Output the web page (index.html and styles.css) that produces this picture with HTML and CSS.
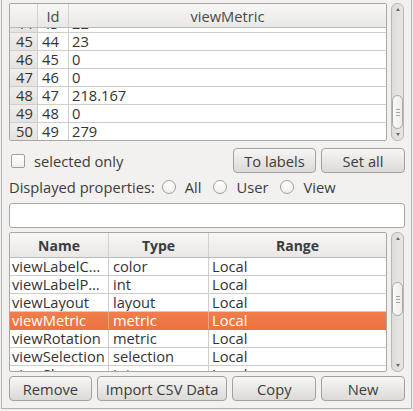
FILE: index.html
```html
<!DOCTYPE html>
<html>
<head>
<meta charset="utf-8">
<link rel="stylesheet" href="styles.css">
</head>
<body>
<div class="panel">
  <div class="tablebox top">
    <div class="table t1">
      <div class="hrow">
        <div class="hc num"></div>
        <div class="hc idc">Id</div>
        <div class="hc last">viewMetric</div>
      </div>
      <div class="tbody">
        <div class="row partial"><div class="c num">44</div><div class="c idc">43</div><div class="c last">22</div></div>
        <div class="row"><div class="c num">45</div><div class="c idc">44</div><div class="c last">23</div></div>
        <div class="row"><div class="c num">46</div><div class="c idc">45</div><div class="c last">0</div></div>
        <div class="row"><div class="c num">47</div><div class="c idc">46</div><div class="c last">0</div></div>
        <div class="row"><div class="c num">48</div><div class="c idc">47</div><div class="c last">218.167</div></div>
        <div class="row"><div class="c num">49</div><div class="c idc">48</div><div class="c last">0</div></div>
        <div class="row"><div class="c num">50</div><div class="c idc">49</div><div class="c last">279</div></div>
      </div>
    </div>
    <div class="sbar">
      <div class="arrow up"></div>
      <div class="trough"><div class="space s1a"></div><div class="thumb"><i></i><i></i><i></i></div><div class="space s1b"></div></div>
      <div class="arrow down"></div>
    </div>
  </div>

  <div class="opts">
    <label class="check"><span class="box"></span>selected only</label>
    <div class="btns">
      <button class="btn w82">To labels</button>
      <button class="btn w83">Set all</button>
    </div>
  </div>

  <div class="disp">
    <span class="lbl">Displayed properties:</span>
    <span class="radio r1"><span class="dot"></span>All</span>
    <span class="radio"><span class="dot"></span>User</span>
    <span class="radio"><span class="dot"></span>View</span>
  </div>

  <div class="input"></div>

  <div class="tablebox bottom">
    <div class="table t2">
      <div class="hrow">
        <div class="hc name">Name</div>
        <div class="hc type">Type</div>
        <div class="hc last">Range</div>
      </div>
      <div class="tbody">
        <div class="row"><div class="c name">viewLabelColor</div><div class="c type">color</div><div class="c last">Local</div></div>
        <div class="row"><div class="c name">viewLabelPosition</div><div class="c type">int</div><div class="c last">Local</div></div>
        <div class="row"><div class="c name">viewLayout</div><div class="c type">layout</div><div class="c last">Local</div></div>
        <div class="row sel"><div class="c name">viewMetric</div><div class="c type">metric</div><div class="c last">Local</div></div>
        <div class="row"><div class="c name">viewRotation</div><div class="c type">metric</div><div class="c last">Local</div></div>
        <div class="row"><div class="c name">viewSelection</div><div class="c type">selection</div><div class="c last">Local</div></div>
        <div class="row"><div class="c name">viewShape</div><div class="c type">int</div><div class="c last">Local</div></div>
      </div>
    </div>
    <div class="sbar">
      <div class="arrow up"></div>
      <div class="trough"><div class="space s2a"></div><div class="thumb"><i></i><i></i><i></i></div><div class="space s2b"></div></div>
      <div class="arrow down"></div>
    </div>
  </div>

  <div class="bbtns">
    <button class="btn w82">Remove</button>
    <button class="btn w130">Import CSV Data</button>
    <button class="btn w83">Copy</button>
    <button class="btn w83">New</button>
  </div>
</div>
</body>
</html>
```

FILE: styles.css
```css
html, body {
  margin: 0;
  padding: 0;
  background: #f2f1f0;
  width: 413px;
  height: 411px;
  overflow: hidden;
}

body {
  font-family: "Open Sans", "DejaVu Sans", sans-serif;
  font-size: 14.7px;
  color: #3c3c3c;
}

.panel {
  box-sizing: border-box;
  margin-left: 1px;
  width: 411px;
  height: 409px;
  border-left: 1px solid #b4b2af;
  border-right: 1px solid #b4b2af;
  border-bottom: 1px solid #b4b2af;
  padding: 3px 5px 0 7px;
  display: flex;
  flex-direction: column;
}

.tablebox {
  display: flex;
  gap: 4px;
  width: 396px;
}
.tablebox.top { height: 138px; }
.tablebox.bottom { height: 140px; margin-top: 4px; }

.table {
  box-sizing: border-box;
  width: 378px;
  border: 1px solid #a9a7a3;
  border-radius: 2px;
  background: #ffffff;
  display: flex;
  flex-direction: column;
  overflow: hidden;
}

.hrow {
  display: flex;
  flex: none;
  background: linear-gradient(#f8f7f6, #e9e8e6);
  border-bottom: 1px solid #bcbab7;
}
.t1 .hrow { height: 23px; }
.t2 .hrow { height: 24px; }

.hc {
  display: flex;
  align-items: center;
  justify-content: center;
  box-sizing: border-box;
  border-right: 1px solid #d3d1ce;
  color: #4a4a4a;
}
.t2 .hc { font-weight: bold; color: #3c3c3c; font-size: 14px; }
.hc.last { border-right: none; flex: 1; }

.tbody {
  flex: 1;
  overflow: hidden;
}

.row {
  display: flex;
  height: 18px;
  box-sizing: border-box;
  border-bottom: 1px solid #cfcdca;
  line-height: 17px;
  color: #333333;
}
.row.partial {
  height: 5px;
  overflow: hidden;
  align-items: flex-end;
}
.row.partial .c {
  flex-shrink: 0;
  height: 17px;
  margin-top: -13px;
}

.c {
  box-sizing: border-box;
  border-right: 1px solid #cfcdca;
  white-space: nowrap;
  overflow: hidden;
  text-overflow: ellipsis;
}
.c.last { border-right: none; flex: 1; }

.num { width: 28px; }
.idc { width: 31px; }
.c.num { background: linear-gradient(#efeeed, #e4e3e1); padding-left: 6px; }
.c.idc { padding-left: 4px; }
.t1 .c.last { padding-left: 3px; }

.name { width: 99px; }
.type { width: 100px; }
.t2 .c.name { padding-left: 2px; padding-right: 1px; }
.t2 .c.type { padding-left: 4px; }
.t2 .c.last { padding-left: 3px; }

.row.sel {
  background: linear-gradient(#f27d4c, #ee7240);
  color: #ffffff;
  border-bottom-color: #ee7240;
}
.row.sel .c { border-right-color: #f5a384; }

/* scrollbar */
.sbar {
  box-sizing: border-box;
  width: 13px;
  border: 1px solid #b9b7b4;
  border-radius: 6px;
  background: linear-gradient(90deg, #dedcd9, #e8e6e4);
  display: flex;
  flex-direction: column;
  align-items: center;
}
.arrow {
  flex: none;
  height: 11px;
  width: 100%;
  display: flex;
  align-items: center;
  justify-content: center;
}
.arrow::before {
  content: "";
  width: 0;
  height: 0;
  border-left: 2.5px solid transparent;
  border-right: 2.5px solid transparent;
}
.arrow.up::before { border-bottom: 3px solid #6a6866; }
.arrow.down::before { border-top: 3px solid #6a6866; }

.trough {
  flex: 1;
  width: 11px;
  display: flex;
  flex-direction: column;
}
.space { flex: none; }
.s1a { height: 80px; }
.s1b { flex: 1; }
.s2a { height: 38px; }
.s2b { flex: 1; }

.thumb {
  box-sizing: border-box;
  flex: none;
  width: 11px;
  height: 34px;
  border: 1px solid #a9a7a4;
  border-radius: 6px;
  background: linear-gradient(90deg, #fafaf9, #eeedeb);
  display: flex;
  flex-direction: column;
  align-items: center;
  justify-content: center;
  gap: 2px;
}
.thumb i {
  display: block;
  width: 4px;
  height: 1px;
  background: #a5a3a0;
}

/* options row */
.opts {
  margin-top: 7px;
  height: 25px;
  display: flex;
  align-items: center;
  justify-content: space-between;
  width: 396px;
}
.check {
  display: flex;
  align-items: center;
  gap: 9px;
  margin-left: 2px;
}
.box {
  box-sizing: border-box;
  width: 14px;
  height: 14px;
  border: 1px solid #a19f9c;
  border-radius: 2px;
  background: linear-gradient(#ffffff, #f0efee);
}
.btns, .bbtns {
  display: flex;
  gap: 5px;
}

.btn {
  box-sizing: border-box;
  height: 25px;
  border: 1px solid #a3a19e;
  border-radius: 4px;
  background: linear-gradient(#f7f6f5, #dcdad7);
  font-family: inherit;
  font-size: 14.7px;
  color: #3c3c3c;
  padding: 0;
  margin: 0;
}
.w82 { width: 83px; }
.w83 { width: 84px; }
.w130 { width: 131px; }

.bbtns {
  margin-top: 4px;
  width: 396px;
}

/* displayed properties */
.disp {
  margin-top: 4px;
  height: 20px;
  display: flex;
  align-items: center;
}
.radio {
  display: flex;
  align-items: center;
  gap: 9px;
  margin-left: 12px;
}
.radio.r1 { margin-left: 7px; }
.dot {
  box-sizing: border-box;
  width: 14px;
  height: 14px;
  border: 1px solid #a19f9c;
  border-radius: 50%;
  background: linear-gradient(#ffffff, #efeeed);
}

.input {
  margin-top: 6px;
  box-sizing: border-box;
  height: 25px;
  width: 396px;
  border: 1px solid #a9a7a3;
  border-radius: 3px;
  background: #ffffff;
}
```
